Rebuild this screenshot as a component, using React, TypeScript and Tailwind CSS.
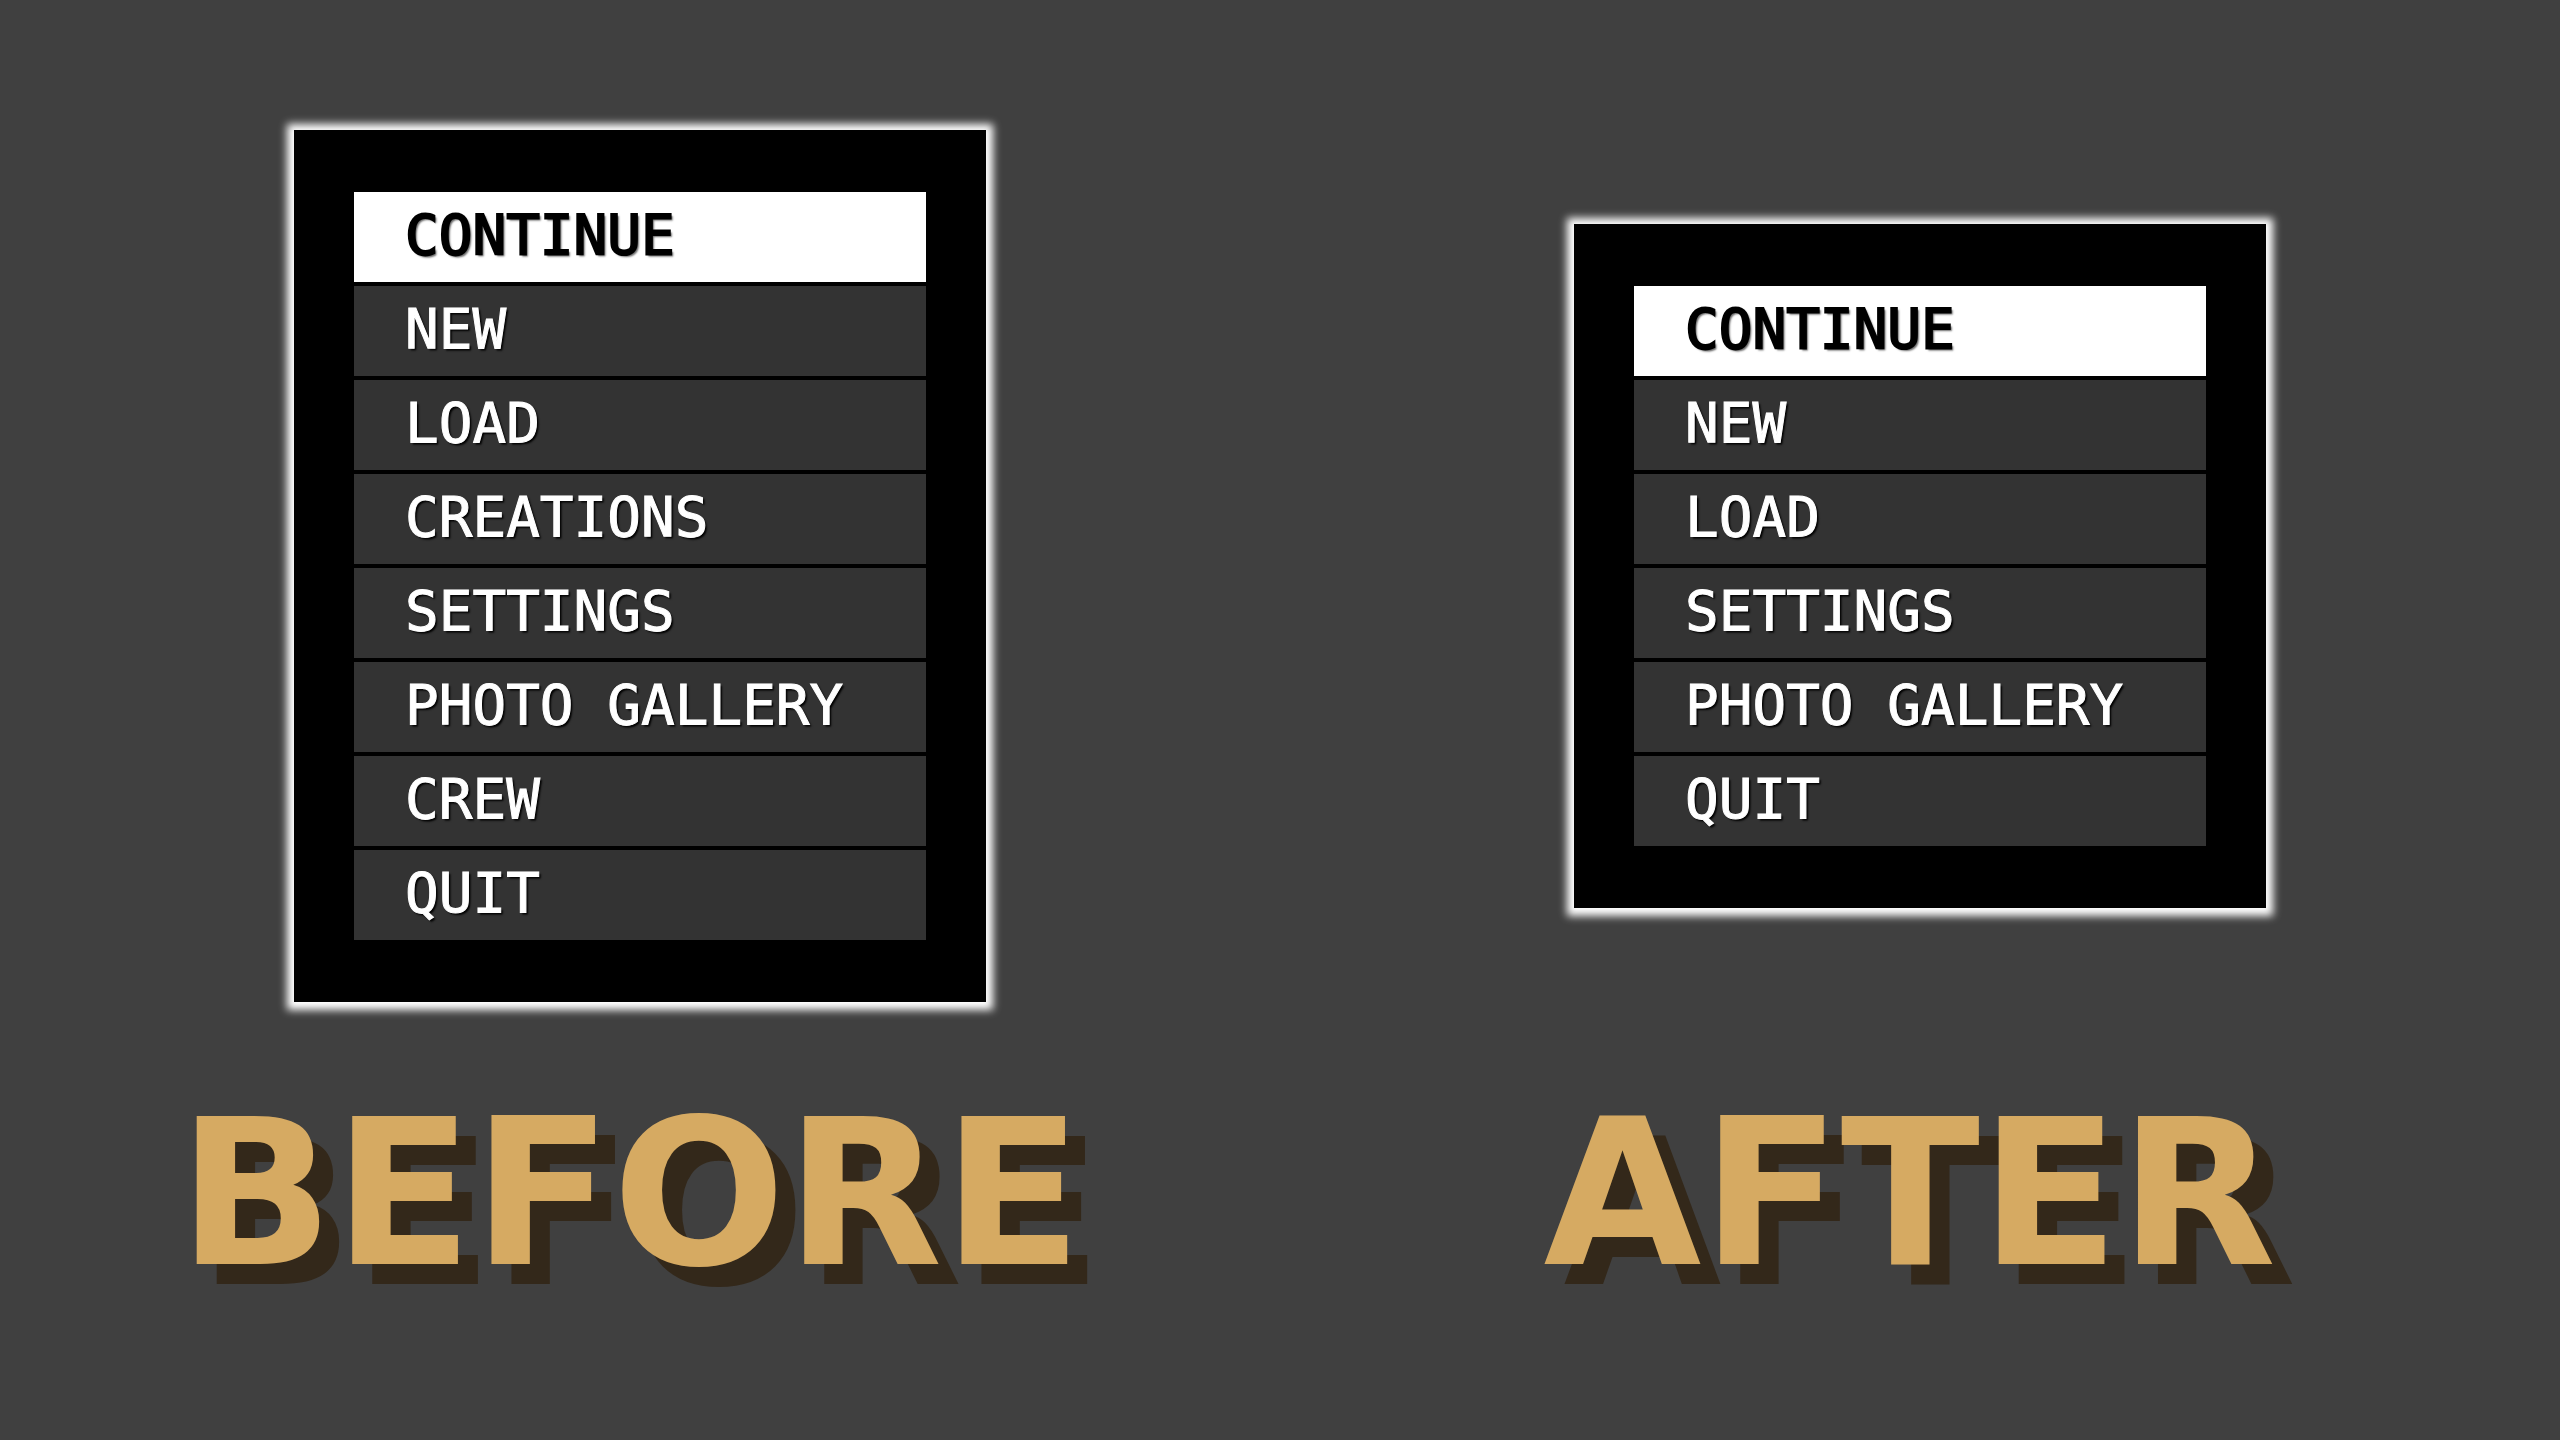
import React from 'react';
import clsx from 'clsx';

interface MenuProps {
  label: string;
  items: string[];
  active: string;
}

const beforeItems = [
  'CONTINUE',
  'NEW',
  'LOAD',
  'CREATIONS',
  'SETTINGS',
  'PHOTO GALLERY',
  'CREW',
  'QUIT'
];

const afterItems = ['CONTINUE', 'NEW', 'LOAD', 'SETTINGS', 'PHOTO GALLERY', 'QUIT'];

const Menu: React.FC<MenuProps> = ({ label, items, active }) => (
  <nav
    aria-label={label}
    className="w-full max-w-[692px] bg-black px-[60px] py-[62px] shadow-[0_1px_8px_7px_#ffffff]"
  >
    <ul className="flex flex-col gap-1">
      {items.map((item) => (
        <li key={item}>
          <button
            type="button"
            aria-current={item === active}
            className={clsx(
              'block h-[90px] w-full whitespace-nowrap pb-1 pl-[51px] text-left text-[56px] leading-none',
              item === active
                ? 'bg-white text-black [-webkit-text-stroke:2px_#000000] [text-shadow:2px_2px_2px_#00000099]'
                : 'bg-[#333333] text-white [-webkit-text-stroke:1px_#ffffff] [text-shadow:2px_2px_2px_#000000]'
            )}
          >
            {item}
          </button>
        </li>
      ))}
    </ul>
  </nav>
);

const Caption: React.FC<{ children: React.ReactNode }> = ({ children }) => (
  <h2 className="pr-5 text-center font-['DejaVu_Sans',sans-serif] text-[204px] font-bold leading-none text-[#d6aa62] [text-shadow:20px_20px_0_#33281a]">
    {children}
  </h2>
);

const App: React.FC = () => {
  return (
    <main className="grid min-h-screen grid-cols-2 content-start items-center justify-items-center gap-y-[90px] overflow-hidden bg-[#404040] pt-[130px] font-['DejaVu_Sans_Mono',monospace]">
      <Menu label="Before" items={beforeItems} active="CONTINUE" />
      <Menu label="After" items={afterItems} active="CONTINUE" />
      <Caption>BEFORE</Caption>
      <Caption>AFTER</Caption>
    </main>
  );
};

export default App;
